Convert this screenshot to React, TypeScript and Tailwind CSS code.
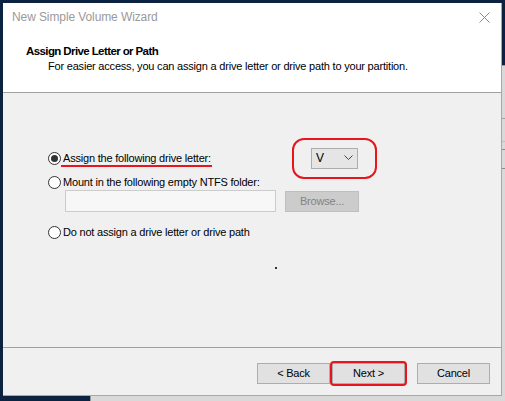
import React from "react";

const font = { fontFamily: '"Liberation Sans", Arial, sans-serif' };

function Radio({ checked }: { checked?: boolean }) {
  return (
    <div className="w-[13px] h-[13px] rounded-full border border-[#333333] bg-white flex items-center justify-center shrink-0">
      {checked && <div className="w-[7px] h-[7px] rounded-full bg-[#333333]" />}
    </div>
  );
}

export default function App() {
  return (
    <div className="relative w-[505px] h-[401px] bg-[#0b2240] overflow-hidden text-[11px] tracking-[-0.2px] text-black" style={font}>
      {/* background window behind */}
      <div className="absolute left-[90px] top-[65px] w-[440px] h-[360px] bg-[#d9d9d9] border border-[#9a9a9a]">
        <div className="absolute right-0 top-[52px] w-[30px] h-px bg-[#a0a0a0]" />
        <div className="absolute right-0 top-[75px] w-[30px] h-px bg-[#c0c0c0]" />
        <div className="absolute right-0 top-[83px] w-[30px] h-px bg-[#8c8c8c]" />
        <div className="absolute right-0 top-[102px] w-[30px] h-px bg-[#8c8c8c]" />
      </div>
      {/* main window */}
      <div className="absolute left-[3px] top-[3px] w-[499px] h-[393px] flex flex-col bg-[#f0f0f0] border-r border-b border-[#a8a8a8]">
        {/* title bar */}
        <div className="h-[28px] bg-white flex items-center justify-between pl-[9px] pr-[10px]">
          <span className="text-[#9a9a9a] text-[12px] tracking-[-0.1px]">New Simple Volume Wizard</span>
          <svg width="11" height="11" viewBox="0 0 11 11" className="mr-[1px]">
            <path d="M0.5 0.5 L10.5 10.5 M10.5 0.5 L0.5 10.5" stroke="#8a8a8a" strokeWidth="1" />
          </svg>
        </div>
        {/* header */}
        <div className="h-[62px] bg-white border-b border-[#a0a0a0] flex flex-col pl-[23px] pt-[12px]">
          <div className="font-bold text-[11.5px] tracking-[-0.6px] leading-[16px]">Assign Drive Letter or Path</div>
          <div className="pl-[22px] leading-[16px] mt-[-1px]">
            For easier access, you can assign a drive letter or drive path to your partition.
          </div>
        </div>
        {/* body */}
        <div className="flex-1 flex flex-col pl-[45px] pt-[54px] border-b border-[#a0a0a0]">
          <div className="flex items-center h-[22px]">
            <div className="w-[263px] flex items-center">
              <Radio checked />
              <span className="relative ml-[2px] leading-[16px]">
                Assign the following drive letter:
                <span className="absolute left-[-2px] right-[-1px] bottom-[-1px] h-[2px] bg-[#e8151c]" />
              </span>
            </div>
            <div className="relative">
              <div className="w-[47px] h-[21px] bg-[#e5e5e5] border border-[#adadad] flex items-center justify-between pl-[4px] pr-[4px]">
                <span className="text-[12px]">V</span>
                <svg width="9" height="6" viewBox="0 0 9 6">
                  <path d="M0.5 0.5 L4.5 4.5 L8.5 0.5" stroke="#444" strokeWidth="1" fill="none" />
                </svg>
              </div>
              <div className="absolute left-[-19px] right-[-19px] top-[-10px] bottom-[-10px] border-[2.5px] border-[#e8151c] rounded-[12px]" />
            </div>
          </div>
          <div className="flex items-center h-[16px] mt-[5px]">
            <Radio />
            <span className="ml-[2px] leading-[16px]">Mount in the following empty NTFS folder:</span>
          </div>
          <div className="flex items-center ml-[17px] h-[22px]">
            <div className="w-[211px] h-[22px] bg-[#f7f7f7] border border-[#cccccc]" />
            <div className="ml-[9px] w-[74px] h-[21px] bg-[#cccccc] border border-[#bfbfbf] flex items-center justify-center text-[#838383]">
              Browse...
            </div>
          </div>
          <div className="flex items-center h-[16px] mt-[12px]">
            <Radio />
            <span className="ml-[2px] leading-[16px]">Do not assign a drive letter or drive path</span>
          </div>
          <div className="mt-[27px] ml-[227px] w-[2px] h-[2px] bg-[#333]" />
        </div>
        {/* footer */}
        <div className="flex-1 max-h-[47px] flex items-start justify-end pt-[15px] pr-[11px]">
          <div className="w-[73px] h-[21px] bg-[#e1e1e1] border border-[#adadad] flex items-center justify-center">
            &lt; Back
          </div>
          <div className="relative ml-[2px]">
            <div className="w-[73px] h-[21px] bg-[#e1e1e1] border border-[#adadad] flex items-center justify-center">
              Next &gt;
            </div>
            <div className="absolute left-[-2px] right-[-2px] top-[-2px] bottom-[-2px] border-[2.5px] border-[#e8151c] rounded-[4px]" />
          </div>
          <div className="ml-[12px] w-[73px] h-[21px] bg-[#e1e1e1] border border-[#adadad] flex items-center justify-center">
            Cancel
          </div>
        </div>
      </div>
    </div>
  );
}
